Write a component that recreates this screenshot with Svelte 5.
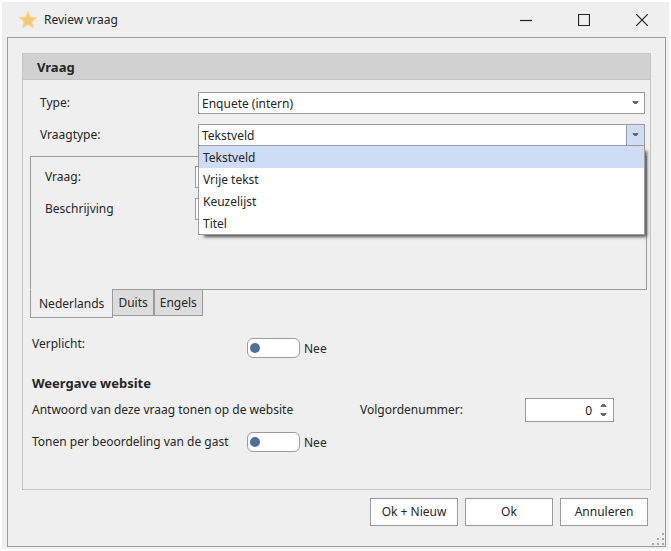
<script>
  const types = ['Enquete (intern)', 'Enquete (extern)'];
  const kinds = ['Tekstveld', 'Vrije tekst', 'Keuzelijst', 'Titel'];
  const languages = ['Nederlands', 'Duits', 'Engels'];

  let type = $state(types[0]);
  let kind = $state(kinds[0]);
  let language = $state(languages[0]);
  let required = $state(false);
  let perReview = $state(false);
  let order = $state(0);
</script>

{#snippet caret(up)}
  <svg class="caret" width="7" height="4" viewBox="0 0 7 4" aria-hidden="true">
    {#if up}
      <path class="soft" d="M0 3h7v1H0z" />
      <path d="M1 3h5v1H1zM1 2h5v1H1zM2 1h3v1H2z" />
    {:else}
      <path class="soft" d="M0 0h7v1H0z" />
      <path d="M1 0h5v2H1zM2 2h3v1H2z" />
    {/if}
  </svg>
{/snippet}

<div class="window">
  <header class="titlebar">
    <svg class="star" width="20" height="20" viewBox="0 0 20 20" aria-hidden="true">
      <path d="M10 1.8l2.3 5.4 5.9.5-4.5 3.9 1.4 5.8-5.1-3.1-5.1 3.1 1.4-5.8-4.5-3.9 5.9-.5z" />
    </svg>
    <h1>Review vraag</h1>
    <div class="controls">
      <button type="button" aria-label="Minimaliseren">
        <svg width="12" height="12" viewBox="0 0 12 12"><path d="M0 6.5h12" /></svg>
      </button>
      <button type="button" aria-label="Maximaliseren">
        <svg width="12" height="12" viewBox="0 0 12 12"><path d="M.5.5h11v11H.5z" /></svg>
      </button>
      <button type="button" aria-label="Sluiten">
        <svg width="12" height="12" viewBox="0 0 12 12"><path d="M.2.2l11.6 11.6M11.8.2L.2 11.8" /></svg>
      </button>
    </div>
  </header>

  <form class="frame" onsubmit={(e) => e.preventDefault()}>
    <section class="group">
      <h2>Vraag</h2>

      <div class="fields">
        <label for="type">Type:</label>
        <div class="combo">
          <select id="type" bind:value={type}>
            {#each types as t}<option>{t}</option>{/each}
          </select>
          <span class="arrow">{@render caret(false)}</span>
        </div>

        <label for="kind">Vraagtype:</label>
        <div class="combo open">
          <select id="kind" bind:value={kind}>
            {#each kinds as k}<option>{k}</option>{/each}
          </select>
          <span class="arrow">{@render caret(false)}</span>
          <ul class="menu" role="listbox" aria-label="Vraagtype">
            {#each kinds as k}
              <li role="option" aria-selected={k === kind}>{k}</li>
            {/each}
          </ul>
        </div>
      </div>

      <div class="tabbed">
        <div class="panel" role="tabpanel">
          <label for="question">Vraag:</label>
          <input id="question" type="text" />
          <label for="description">Beschrijving</label>
          <input id="description" type="text" />
        </div>
        <div class="tabs" role="tablist">
          {#each languages as l}
            <button type="button" role="tab" aria-selected={l === language} onclick={() => (language = l)}>{l}</button>
          {/each}
        </div>
      </div>

      <div class="options">
        <div class="row first">
          <label for="required">Verplicht:</label>
          <div class="switch">
            <input id="required" type="checkbox" role="switch" bind:checked={required} />
            <span>{required ? 'Ja' : 'Nee'}</span>
          </div>
        </div>

        <h3>Weergave website</h3>

        <div class="row">
          <p>Antwoord van deze vraag tonen op de website</p>
          <label class="order" for="order">Volgordenummer:</label>
          <div class="spinner">
            <input id="order" type="text" inputmode="numeric" bind:value={order} />
            <div class="steps">
              <button type="button" aria-label="Omhoog" onclick={() => (order = +order + 1)}>{@render caret(true)}</button>
              <button type="button" aria-label="Omlaag" onclick={() => (order = +order - 1)}>{@render caret(false)}</button>
            </div>
          </div>
        </div>

        <div class="row last">
          <label for="per-review">Tonen per beoordeling van de gast</label>
          <div class="switch">
            <input id="per-review" type="checkbox" role="switch" bind:checked={perReview} />
            <span>{perReview ? 'Ja' : 'Nee'}</span>
          </div>
        </div>
      </div>
    </section>

    <footer>
      <button type="submit">Ok + Nieuw</button>
      <button type="submit">Ok</button>
      <button type="button">Annuleren</button>
    </footer>

    <svg class="grip" width="13" height="13" viewBox="0 0 13 13" aria-hidden="true">
      <path d="M10 0h2v2h-2zM5 5h2v2H5zM10 5h2v2h-2zM0 10h2v2H0zM5 10h2v2H5zM10 10h2v2h-2z" />
    </svg>
  </form>
</div>

<style>
  :global(body) {
    margin: 0;
    background: #fff;
  }

  .window {
    --line: #9b9b9b;
    --blue: #cfdcf5;
    box-sizing: border-box;
    display: flex;
    flex-direction: column;
    min-height: calc(100vh - 4px);
    margin: 2px;
    padding: 0 3px 2px 5px;
    background: #efefef;
    color: #262626;
    font: 12px/16px "Noto Sans", "Open Sans", sans-serif;
  }

  .window * {
    box-sizing: border-box;
  }

  h1,
  h2,
  h3,
  p,
  ul {
    margin: 0;
    padding: 0;
    font-size: 12px;
  }

  button,
  input,
  select {
    margin: 0;
    padding: 0;
    border: 1px solid var(--line);
    border-radius: 0;
    background: #fff;
    color: inherit;
    font: inherit;
  }

  .titlebar {
    display: flex;
    align-items: center;
    height: 35px;
    padding-left: 11px;
  }

  .star {
    fill: #f1c97b;
    stroke: #fcd58b;
    stroke-width: 1.4;
    stroke-linejoin: round;
  }

  h1 {
    margin-left: 6px;
    font-weight: 400;
  }

  .controls {
    display: flex;
    gap: 10px;
    margin-left: auto;
  }

  .controls button {
    display: grid;
    place-items: center;
    width: 48px;
    height: 34px;
    border: 0;
    background: none;
  }

  .controls svg {
    fill: none;
    stroke: #222;
    stroke-width: 1.2;
  }

  .frame {
    position: relative;
    display: flex;
    flex: 1;
    flex-direction: column;
    padding: 15px 14px 20px;
    border: 1px solid var(--line);
  }

  .group {
    flex: 1;
    border: 1px solid #c5c5c5;
  }

  h2,
  h3 {
    font-size: 13px;
    font-weight: 700;
  }

  h2 {
    padding: 5px 14px 4px;
    border-bottom: 1px solid #c5c5c5;
    background: #d1d1d1;
  }

  .fields {
    display: grid;
    grid-template-columns: 158px 1fr;
    align-items: center;
    gap: 10px 0;
    padding: 12px 5px 10px 17px;
  }

  .combo {
    position: relative;
    display: flex;
  }

  .combo select {
    flex: 1;
    height: 22px;
    padding: 2px 20px 0 3px;
    appearance: none;
  }

  .arrow {
    position: absolute;
    top: 1px;
    right: 1px;
    bottom: 1px;
    display: grid;
    place-items: center;
    width: 18px;
    pointer-events: none;
  }

  .open .arrow {
    border-left: 1px solid var(--line);
    background: var(--blue);
  }

  .caret {
    display: block;
    fill: #6b6b6b;
  }

  .soft {
    opacity: 0.4;
  }

  .menu {
    position: absolute;
    z-index: 1;
    top: 21px;
    right: 0;
    left: 0;
    border: 1px solid var(--line);
    background: #fff;
    box-shadow: 4px 4px 3px -2px #555;
    list-style: none;
  }

  .menu li {
    padding: 4px 4px 2px;
  }

  .menu li[aria-selected="true"] {
    background: var(--blue);
  }

  .tabbed {
    padding: 0 3px 0 7px;
  }

  .panel {
    display: grid;
    grid-template-columns: 150px 1fr;
    align-content: start;
    align-items: center;
    gap: 10px 0;
    min-height: 134px;
    padding: 9px 8px 9px 14px;
    border: 1px solid var(--line);
  }

  .panel input {
    height: 22px;
  }

  .tabs {
    display: flex;
    align-items: flex-start;
    margin-top: -1px;
  }

  .tabs button {
    height: 27px;
    padding: 0 5px;
    background: #dcdcdc;
  }

  .tabs button[aria-selected="true"] {
    height: 29px;
    margin-right: -1px;
    padding: 0 8px;
    border-top-color: #efefef;
    background: #efefef;
  }

  .options {
    padding: 18px 36px 0 9px;
  }

  .row {
    display: flex;
    align-items: center;
  }

  .row.first {
    align-items: flex-start;
  }

  .row > label:first-child {
    width: 215px;
  }

  .row p {
    width: 328px;
  }

  .order {
    flex: 1;
  }

  .first .switch {
    padding-top: 2px;
  }

  .switch {
    display: flex;
    align-items: center;
    gap: 4px;
  }

  .switch span {
    padding-top: 2px;
  }

  .switch input {
    display: flex;
    align-items: center;
    width: 53px;
    height: 20px;
    padding: 0 2px;
    border-radius: 6px;
    appearance: none;
  }

  .switch input::before {
    width: 10px;
    height: 10px;
    border-radius: 50%;
    background: #4f6d9f;
    content: "";
  }

  .switch input:checked {
    justify-content: flex-end;
  }

  h3 {
    padding: 17px 0 7px;
  }

  .spinner {
    display: flex;
    width: 89px;
    height: 24px;
    border: 1px solid var(--line);
    background: #fff;
  }

  .spinner input {
    flex: 1;
    min-width: 0;
    padding: 2px 1px 0 0;
    border: 0;
    text-align: right;
  }

  .steps {
    display: flex;
    flex-direction: column;
    justify-content: center;
    gap: 6px;
    width: 20px;
  }

  .steps button {
    display: flex;
    justify-content: center;
    border: 0;
  }

  .row.last {
    padding-top: 10px;
  }

  footer {
    display: flex;
    justify-content: flex-end;
    gap: 7px;
    padding: 8px 3px 0 0;
  }

  footer button {
    width: 88px;
    height: 28px;
  }

  .grip {
    position: absolute;
    right: 0;
    bottom: 0;
    fill: #a6a6a6;
  }
</style>
